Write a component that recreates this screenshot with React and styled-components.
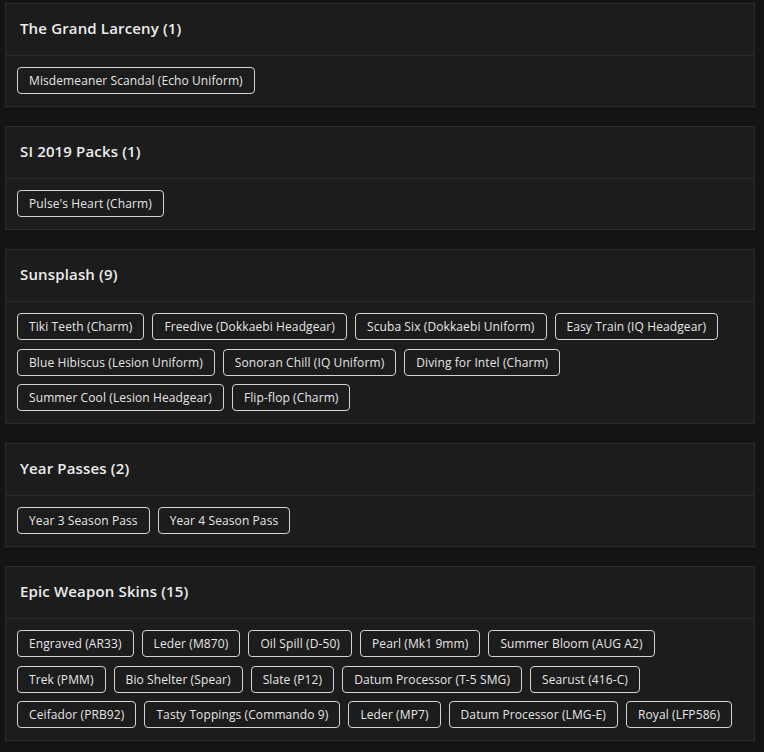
import React from "react";
import styled, { createGlobalStyle } from "styled-components";

const GlobalStyle = createGlobalStyle`
  html, body {
    margin: 0;
    padding: 0;
    background: #141414;
  }
  body {
    font-family: "Open Sans", "Liberation Sans", sans-serif;
    color: #e4e4e4;
  }
`;

const Page = styled.div`
  display: flex;
  flex-direction: column;
  gap: 19px;
  padding: 3px 9px 0 5px;
`;

const Card = styled.section`
  background: #1c1c1c;
  border: 1px solid #2b2b2b;
`;

const Header = styled.div`
  height: 52px;
  box-sizing: border-box;
  display: flex;
  align-items: center;
  padding: 0 14px 3px;
  border-bottom: 1px solid #2b2b2b;
  font-size: 15px;
  font-weight: 600;
  letter-spacing: 0.15px;
  color: #ececec;
`;

const Body = styled.div`
  display: flex;
  flex-wrap: wrap;
  gap: 8.5px 8px;
  padding: 11px 11px 12px;
`;

const Tag = styled.span`
  display: inline-flex;
  align-items: center;
  height: 27px;
  box-sizing: border-box;
  padding: 0 11px;
  border: 1px solid #d2d2d2;
  border-radius: 4px;
  font-size: 12px;
  letter-spacing: 0.1px;
  color: #e6e6e6;
  white-space: nowrap;
`;

const sections = [
  { title: "The Grand Larceny", items: ["Misdemeaner Scandal (Echo Uniform)"] },
  { title: "SI 2019 Packs", items: ["Pulse's Heart (Charm)"] },
  {
    title: "Sunsplash",
    items: [
      "Tiki Teeth (Charm)",
      "Freedive (Dokkaebi Headgear)",
      "Scuba Six (Dokkaebi Uniform)",
      "Easy Train (IQ Headgear)",
      "Blue Hibiscus (Lesion Uniform)",
      "Sonoran Chill (IQ Uniform)",
      "Diving for Intel (Charm)",
      "Summer Cool (Lesion Headgear)",
      "Flip-flop (Charm)",
    ],
  },
  { title: "Year Passes", items: ["Year 3 Season Pass", "Year 4 Season Pass"] },
  {
    title: "Epic Weapon Skins",
    items: [
      "Engraved (AR33)",
      "Leder (M870)",
      "Oil Spill (D-50)",
      "Pearl (Mk1 9mm)",
      "Summer Bloom (AUG A2)",
      "Trek (PMM)",
      "Bio Shelter (Spear)",
      "Slate (P12)",
      "Datum Processor (T-5 SMG)",
      "Searust (416-C)",
      "Ceifador (PRB92)",
      "Tasty Toppings (Commando 9)",
      "Leder (MP7)",
      "Datum Processor (LMG-E)",
      "Royal (LFP586)",
    ],
  },
];

const App = () => {
  return (
    <>
      <GlobalStyle />
      <Page>
        {sections.map((section) => (
          <Card key={section.title}>
            <Header>
              {section.title} ({section.items.length})
            </Header>
            <Body>
              {section.items.map((item) => (
                <Tag key={item}>{item}</Tag>
              ))}
            </Body>
          </Card>
        ))}
      </Page>
    </>
  );
};

export default App;
